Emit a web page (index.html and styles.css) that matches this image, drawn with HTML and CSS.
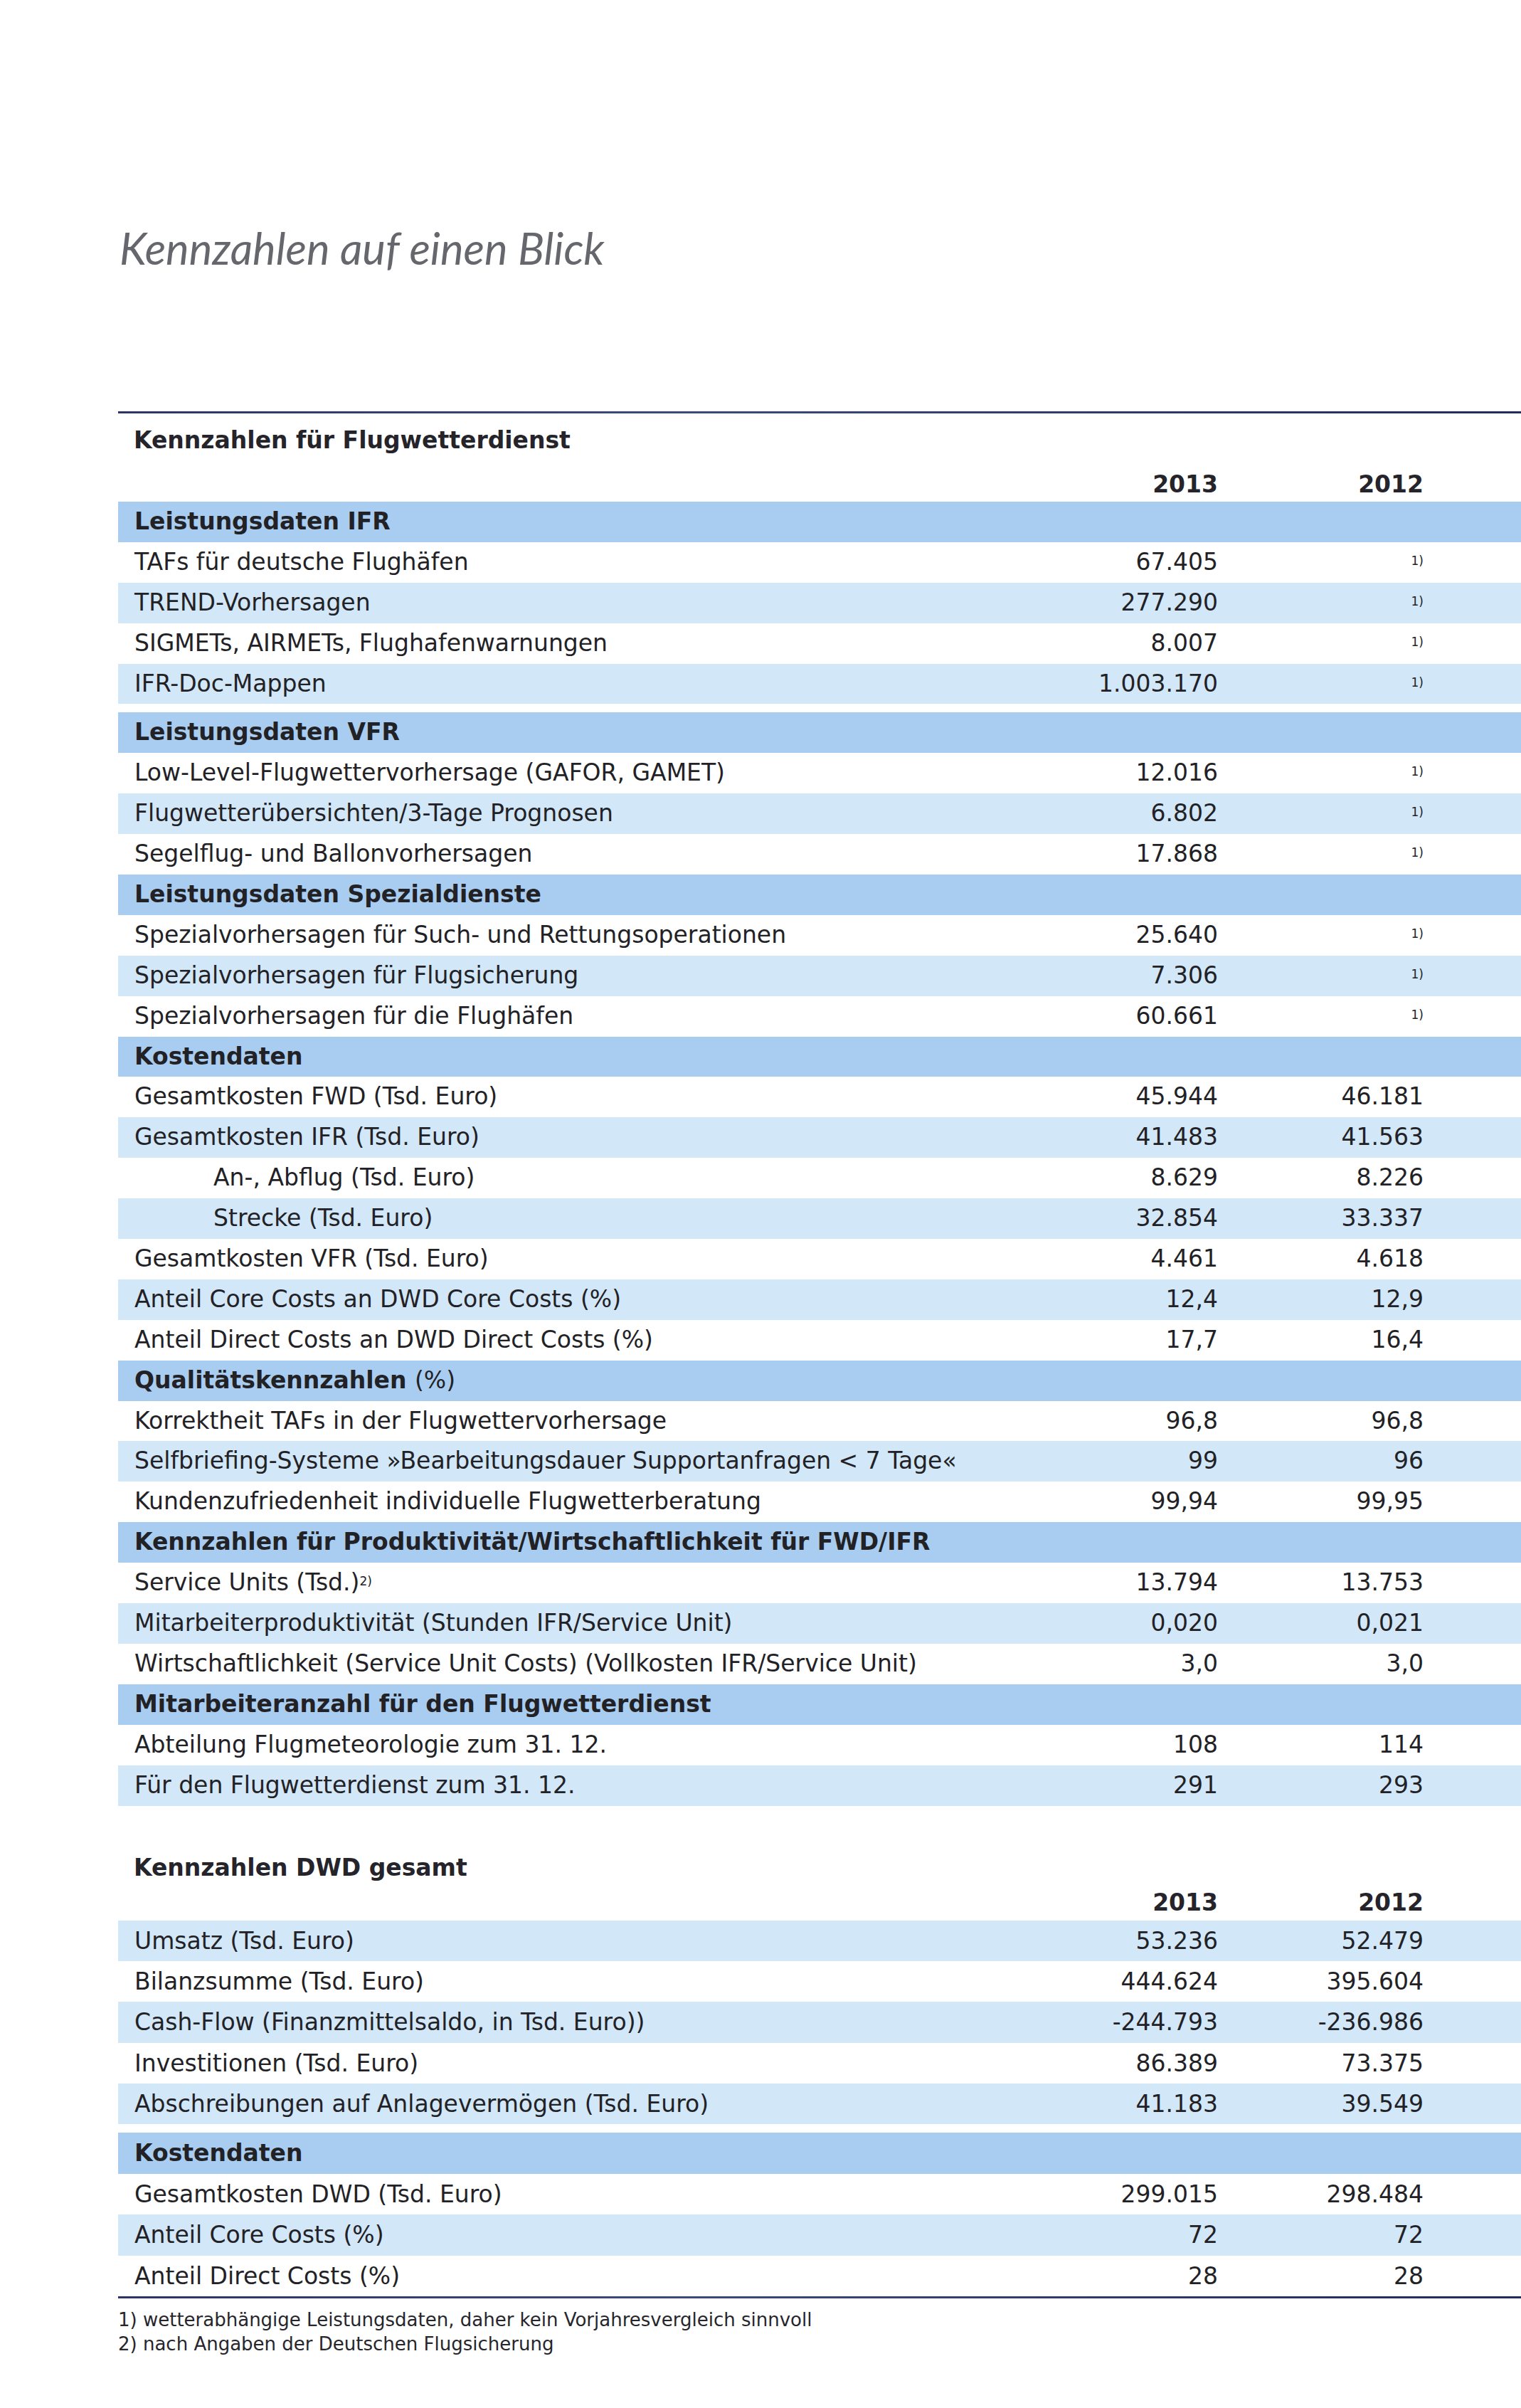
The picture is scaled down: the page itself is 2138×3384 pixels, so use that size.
FILE: index.html
```html
<!DOCTYPE html>
<html lang="de">
<head>
<meta charset="utf-8">
<title>Kennzahlen auf einen Blick</title>
<link rel="stylesheet" href="styles.css">
</head>
<body>
<div class="page">
  <h1 class="title">Kennzahlen auf einen Blick</h1>
  <div class="rule rule-top"></div>

  <section class="block">
    <h2 class="block-head">Kennzahlen für Flugwetterdienst</h2>
    <div class="years"><span class="spacer-col"></span><span class="y">2013</span><span class="y">2012</span><span></span></div>
    <div class="table">
      <div class="row band"><span class="label">Leistungsdaten IFR</span></div>
      <div class="row"><span class="label">TAFs für deutsche Flughäfen</span><span class="v">67.405</span><span class="v"><span class="fn">1)</span></span></div>
      <div class="row alt"><span class="label">TREND-Vorhersagen</span><span class="v">277.290</span><span class="v"><span class="fn">1)</span></span></div>
      <div class="row"><span class="label">SIGMETs, AIRMETs, Flughafenwarnungen</span><span class="v">8.007</span><span class="v"><span class="fn">1)</span></span></div>
      <div class="row alt"><span class="label">IFR-Doc-Mappen</span><span class="v">1.003.170</span><span class="v"><span class="fn">1)</span></span></div>
      <div class="gap"></div>
      <div class="row band"><span class="label">Leistungsdaten VFR</span></div>
      <div class="row"><span class="label">Low-Level-Flugwettervorhersage (GAFOR, GAMET)</span><span class="v">12.016</span><span class="v"><span class="fn">1)</span></span></div>
      <div class="row alt"><span class="label">Flugwetterübersichten/3-Tage Prognosen</span><span class="v">6.802</span><span class="v"><span class="fn">1)</span></span></div>
      <div class="row"><span class="label">Segelflug- und Ballonvorhersagen</span><span class="v">17.868</span><span class="v"><span class="fn">1)</span></span></div>
      <div class="row band"><span class="label">Leistungsdaten Spezialdienste</span></div>
      <div class="row"><span class="label">Spezialvorhersagen für Such- und Rettungsoperationen</span><span class="v">25.640</span><span class="v"><span class="fn">1)</span></span></div>
      <div class="row alt"><span class="label">Spezialvorhersagen für Flugsicherung</span><span class="v">7.306</span><span class="v"><span class="fn">1)</span></span></div>
      <div class="row"><span class="label">Spezialvorhersagen für die Flughäfen</span><span class="v">60.661</span><span class="v"><span class="fn">1)</span></span></div>
      <div class="row band"><span class="label">Kostendaten</span></div>
      <div class="row"><span class="label">Gesamtkosten FWD (Tsd. Euro)</span><span class="v">45.944</span><span class="v">46.181</span></div>
      <div class="row alt"><span class="label">Gesamtkosten IFR (Tsd. Euro)</span><span class="v">41.483</span><span class="v">41.563</span></div>
      <div class="row"><span class="label indent">An-, Abflug (Tsd. Euro)</span><span class="v">8.629</span><span class="v">8.226</span></div>
      <div class="row alt"><span class="label indent">Strecke (Tsd. Euro)</span><span class="v">32.854</span><span class="v">33.337</span></div>
      <div class="row"><span class="label">Gesamtkosten VFR (Tsd. Euro)</span><span class="v">4.461</span><span class="v">4.618</span></div>
      <div class="row alt"><span class="label">Anteil Core Costs an DWD Core Costs (%)</span><span class="v">12,4</span><span class="v">12,9</span></div>
      <div class="row"><span class="label">Anteil Direct Costs an DWD Direct Costs (%)</span><span class="v">17,7</span><span class="v">16,4</span></div>
      <div class="row band"><span class="label">Qualitätskennzahlen <span class="normal">(%)</span></span></div>
      <div class="row"><span class="label">Korrektheit TAFs in der Flugwettervorhersage</span><span class="v">96,8</span><span class="v">96,8</span></div>
      <div class="row alt"><span class="label">Selfbriefing-Systeme »Bearbeitungsdauer Supportanfragen &lt; 7 Tage«</span><span class="v">99</span><span class="v">96</span></div>
      <div class="row"><span class="label">Kundenzufriedenheit individuelle Flugwetterberatung</span><span class="v">99,94</span><span class="v">99,95</span></div>
      <div class="row band"><span class="label">Kennzahlen für Produktivität/Wirtschaftlichkeit für FWD/IFR</span></div>
      <div class="row"><span class="label">Service Units (Tsd.)<span class="fn">2)</span></span><span class="v">13.794</span><span class="v">13.753</span></div>
      <div class="row alt"><span class="label">Mitarbeiterproduktivität (Stunden IFR/Service Unit)</span><span class="v">0,020</span><span class="v">0,021</span></div>
      <div class="row"><span class="label">Wirtschaftlichkeit (Service Unit Costs) (Vollkosten IFR/Service Unit)</span><span class="v">3,0</span><span class="v">3,0</span></div>
      <div class="row band"><span class="label">Mitarbeiteranzahl für den Flugwetterdienst</span></div>
      <div class="row"><span class="label">Abteilung Flugmeteorologie zum 31. 12.</span><span class="v">108</span><span class="v">114</span></div>
      <div class="row alt"><span class="label">Für den Flugwetterdienst zum 31. 12.</span><span class="v">291</span><span class="v">293</span></div>
    </div>
  </section>

  <section class="block block-dwd">
    <h2 class="block-head">Kennzahlen DWD gesamt</h2>
    <div class="years years-dwd"><span class="spacer-col"></span><span class="y">2013</span><span class="y">2012</span><span></span></div>
    <div class="table table-dwd">
      <div class="row alt"><span class="label">Umsatz (Tsd. Euro)</span><span class="v">53.236</span><span class="v">52.479</span></div>
      <div class="row"><span class="label">Bilanzsumme (Tsd. Euro)</span><span class="v">444.624</span><span class="v">395.604</span></div>
      <div class="row alt"><span class="label">Cash-Flow (Finanzmittelsaldo, in Tsd. Euro))</span><span class="v">-244.793</span><span class="v">-236.986</span></div>
      <div class="row"><span class="label">Investitionen (Tsd. Euro)</span><span class="v">86.389</span><span class="v">73.375</span></div>
      <div class="row alt"><span class="label">Abschreibungen auf Anlagevermögen (Tsd. Euro)</span><span class="v">41.183</span><span class="v">39.549</span></div>
      <div class="gap"></div>
      <div class="row band"><span class="label">Kostendaten</span></div>
      <div class="row"><span class="label">Gesamtkosten DWD (Tsd. Euro)</span><span class="v">299.015</span><span class="v">298.484</span></div>
      <div class="row alt"><span class="label">Anteil Core Costs (%)</span><span class="v">72</span><span class="v">72</span></div>
      <div class="row"><span class="label">Anteil Direct Costs (%)</span><span class="v">28</span><span class="v">28</span></div>
    </div>
  </section>

  <div class="rule rule-bottom"></div>
  <div class="notes">
    <p>1) wetterabhängige Leistungsdaten, daher kein Vorjahresvergleich sinnvoll</p>
    <p>2) nach Angaben der Deutschen Flugsicherung</p>
  </div>
</div>
</body>
</html>
```

FILE: styles.css
```css
html, body {
  margin: 0;
  padding: 0;
  background: #ffffff;
  overflow-x: hidden;
}

.page {
  width: 1972px;
  padding: 313px 0 60px 166px;
  font-family: "DejaVu Sans", Verdana, sans-serif;
  color: #222226;
}

.title {
  margin: 0 0 0 2px;
  height: 70px;
  font-family: "Lato", "Open Sans", sans-serif;
  font-style: italic;
  font-weight: 400;
  font-size: 61.5px;
  line-height: 70px;
  color: #66676d;
}

.rule {
  height: 3px;
  background: linear-gradient(90deg, #2a3563 0%, #3c4a78 40%, #1f2b5c 100%);
}

.rule-top {
  margin-top: 195px;
}

.block-head {
  margin: 18px 0 0 22px;
  height: 40px;
  font-size: 33px;
  line-height: 40px;
  font-weight: 700;
  color: #24242a;
}

.years,
.row {
  display: grid;
  grid-template-columns: 1342px 204px 289px 137px;
}

.years {
  margin-top: 22px;
  margin-bottom: 4px;
  height: 40px;
  font-size: 33px;
  line-height: 40px;
  font-weight: 700;
  color: #24242a;
}

.years .y {
  text-align: right;
}

.table {
  --rh: 56.9px;
}

.row {
  height: var(--rh);
  font-size: 33px;
  line-height: var(--rh);
  white-space: nowrap;
}

.row.alt {
  background: #d2e7f8;
}

.row.band {
  background: #a9cdf0;
  font-weight: 700;
}

.band .label {
  grid-column: 1 / -1;
}

.label {
  padding-left: 23px;
}

.label.indent {
  padding-left: 134px;
}

.normal {
  font-weight: 400;
}

.v {
  text-align: right;
}

.fn {
  font-size: 17px;
  vertical-align: 7px;
  line-height: 1;
}

.gap {
  height: 12px;
}

.block-dwd .block-head {
  margin-top: 67px;
}

.years-dwd {
  margin-top: 9px;
  margin-bottom: 5px;
}

.table-dwd {
  --rh: 57.4px;
}

.notes {
  margin-top: 13px;
  font-size: 26px;
  line-height: 34px;
  color: #26262c;
}

.notes p {
  margin: 0;
}
```
